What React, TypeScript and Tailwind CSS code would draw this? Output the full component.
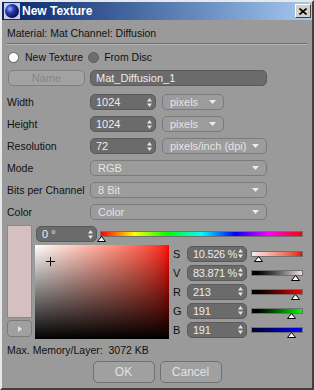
import React from 'react';

// small up/down spinner arrows used in the number fields
const Spinner = () => (
  <svg width="5" height="9" viewBox="0 0 5 9" className="shrink-0">
    <path d="M2.5 0 L5 3.5 L0 3.5 Z" fill="#e6e6e6" />
    <path d="M0 5.5 L5 5.5 L2.5 9 Z" fill="#e6e6e6" />
  </svg>
);

const DownArrow = () => (
  <svg width="7" height="4" viewBox="0 0 7 4" className="shrink-0">
    <path d="M0 0 L7 0 L3.5 4 Z" fill="#ececec" />
  </svg>
);

const NumField = ({ value, className = '' }: { value: string; className?: string }) => (
  <div
    className={`flex h-[16px] items-center justify-between overflow-hidden whitespace-nowrap rounded-[5px] border border-[#5a5a5a] bg-[#6b6b6b] pl-[5px] pr-[3px] text-[11px] text-[#ececec] ${className}`}
  >
    <span>{value}</span>
    <Spinner />
  </div>
);

const Dropdown = ({ value, className = '' }: { value: string; className?: string }) => (
  <div
    className={`flex h-[16px] items-center justify-between whitespace-nowrap rounded-[5px] border border-[#7a7a7a] bg-[#9c9c9c] pl-[7px] pr-[7px] text-[11px] text-[#e4e4e4] ${className}`}
  >
    <span>{value}</span>
    <DownArrow />
  </div>
);

const Marker = ({ left }: { left: number }) => (
  <svg
    width="9"
    height="6"
    viewBox="0 0 9 6"
    className="absolute top-full"
    style={{ left: left - 4 }}
  >
    <path d="M4.5 0.5 L8.5 5.5 L0.5 5.5 Z" fill="#ffffff" stroke="#000000" strokeWidth="1" />
  </svg>
);

interface ChannelRow {
  label: string;
  value: string;
  gradient: string;
  marker: number;
}

const channels: ChannelRow[] = [
  { label: 'S', value: '10.526 %', gradient: 'bg-linear-to-r from-[#f4ecec] to-[#e00000]', marker: 6 },
  { label: 'V', value: '83.871 %', gradient: 'bg-linear-to-r from-[#000000] to-[#ece2e2]', marker: 43 },
  { label: 'R', value: '213', gradient: 'bg-linear-to-r from-[#000000] to-[#ff0000]', marker: 43 },
  { label: 'G', value: '191', gradient: 'bg-linear-to-r from-[#000000] to-[#00ff00]', marker: 39 },
  { label: 'B', value: '191', gradient: 'bg-linear-to-r from-[#000030] to-[#0000ff]', marker: 39 },
];

const App = () => {
  return (
    <div
      className="relative flex h-[390px] w-[314px] flex-col overflow-hidden border-2 border-t-[#e8e8e8] border-l-[#e8e8e8] border-r-[#404040] border-b-[#404040] bg-[#9a9a9a] text-[10.5px] leading-[14px] text-[#111]"
      style={{ fontFamily: '"Liberation Sans", Arial, sans-serif' }}
    >
      {/* Title bar */}
      <div className="flex h-[18px] items-center bg-linear-to-r from-[#0a246a] to-[#a6caf0] pl-[2px] pr-[1px]">
        <svg width="16" height="16" viewBox="0 0 16 16" className="shrink-0">
          <defs>
            <radialGradient id="sph" cx="0.35" cy="0.35" r="0.7">
              <stop offset="0" stopColor="#9fb4ff" />
              <stop offset="0.4" stopColor="#2a3fb0" />
              <stop offset="1" stopColor="#050a40" />
            </radialGradient>
          </defs>
          <rect x="0" y="0" width="16" height="16" fill="#c8d0e8" />
          <circle cx="8" cy="8" r="7" fill="url(#sph)" />
        </svg>
        <span className="ml-[2px] text-[12px] font-bold text-white">New Texture</span>
        <div className="ml-auto flex h-[14px] w-[16px] items-center justify-center border border-t-white border-l-white border-r-[#404040] border-b-[#404040] bg-[#d4d0c8]">
          <svg width="8" height="7" viewBox="0 0 8 7">
            <path d="M0.5 0.5 L7.5 6.5 M7.5 0.5 L0.5 6.5" stroke="#000" strokeWidth="1.6" />
          </svg>
        </div>
      </div>

      <div className="flex flex-col px-[5px]">
        <div className="mt-[6px] h-[14px]">Material: Mat Channel: Diffusion</div>
        <div className="mt-[3px] border-t border-b border-t-[#707070] border-b-[#b4b4b4]" />

        {/* Radio row */}
        <div className="mt-[5px] flex h-[14px] items-center">
          <div className="ml-[1px] h-[11px] w-[11px] rounded-full border border-[#606060] bg-white" />
          <span className="ml-[6px]">New Texture</span>
          <div className="ml-[5px] h-[11px] w-[11px] rounded-full border border-[#5a5a5a] bg-[#6e6e6e]" />
          <span className="ml-[5px]">From Disc</span>
        </div>

        {/* Name row */}
        <div className="mt-[6px] flex h-[16px] items-center">
          <div className="ml-[1px] flex h-[16px] w-[77px] items-center justify-center rounded-[5px] border border-[#7e7e7e] bg-[#a2a2a2] text-[11px] text-[#868686]">
            Name
          </div>
          <div className="ml-[5px] flex h-[16px] w-[177px] items-center rounded-[5px] border border-[#5a5a5a] bg-[#6b6b6b] pl-[5px] text-[11px] text-[#ececec]">
            Mat_Diffusion_1
          </div>
        </div>

        {/* Width / Height / Resolution */}
        <div className="mt-[8px] flex h-[16px] items-center">
          <span className="w-[83px]">Width</span>
          <NumField value="1024" className="w-[66px]" />
          <Dropdown value="pixels" className="ml-[6px] w-[62px]" />
        </div>
        <div className="mt-[6px] flex h-[16px] items-center">
          <span className="w-[83px]">Height</span>
          <NumField value="1024" className="w-[66px]" />
          <Dropdown value="pixels" className="ml-[6px] w-[62px]" />
        </div>
        <div className="mt-[6px] flex h-[16px] items-center">
          <span className="w-[83px]">Resolution</span>
          <NumField value="72" className="w-[66px]" />
          <Dropdown value="pixels/inch (dpi)" className="ml-[6px] w-[105px]" />
        </div>

        {/* Mode / Bits / Color */}
        <div className="mt-[6px] flex h-[16px] items-center">
          <span className="w-[83px]">Mode</span>
          <Dropdown value="RGB" className="w-[177px]" />
        </div>
        <div className="mt-[6px] flex h-[16px] items-center">
          <span className="w-[83px] whitespace-nowrap">Bits per Channel</span>
          <Dropdown value="8 Bit" className="w-[177px]" />
        </div>
        <div className="mt-[6px] flex h-[16px] items-center">
          <span className="w-[83px]">Color</span>
          <Dropdown value="Color" className="w-[177px]" />
        </div>

        {/* Color picker */}
        <div className="mt-[5px] flex">
          <div className="flex w-[25px] flex-col">
            <div className="h-[93px] border border-[#8a8a8a] bg-[#d5bfbf]" />
            <div className="mt-[2px] flex h-[17px] items-center justify-center rounded-[4px] border border-[#7a7a7a] bg-[#a0a0a0]">
              <svg width="4" height="6" viewBox="0 0 4 6">
                <path d="M0 0 L4 3 L0 6 Z" fill="#e8e8e8" />
              </svg>
            </div>
          </div>

          <div className="ml-[3px] flex flex-col">
            <div className="flex items-start">
              <NumField value="0 °" className="ml-[1px] mt-[1px] h-[15px] w-[61px]" />
              <div className="relative ml-[3px] mt-[6px] h-[6px] w-[203px] border border-[#707070] bg-[linear-gradient(to_right,#ff0000,#ffff00,#00ff00,#00ffff,#0000ff,#ff00ff,#ff0000)]">
                <Marker left={0} />
              </div>
            </div>

            <div className="mt-[3px] flex">
              {/* SV square */}
              <div className="relative h-[94px] w-[134px] bg-linear-to-r from-white to-[#ff0000]">
                <div className="absolute inset-0 bg-linear-to-b from-transparent to-black" />
                <svg width="9" height="9" viewBox="0 0 9 9" className="absolute left-[11px] top-[12px]">
                  <path d="M4.5 0 V9 M0 4.5 H9" stroke="#000" strokeWidth="1" />
                </svg>
              </div>

              {/* Channel rows */}
              <div className="ml-[4px] mt-[1px] flex flex-col gap-[4px]">
                {channels.map((c) => (
                  <div key={c.label} className="flex h-[15px] items-center">
                    <span className="w-[14px] text-[11px]">{c.label}</span>
                    <NumField value={c.value} className="h-[15px] w-[60px] tracking-[-0.3px]" />
                    <div className={`relative ml-[4px] h-[6px] w-[52px] border border-[#707070] ${c.gradient}`}>
                      <Marker left={c.marker} />
                    </div>
                  </div>
                ))}
              </div>
            </div>
          </div>
        </div>

        <div className="mt-[4px] h-[14px]">Max. Memory/Layer:&nbsp; 3072 KB</div>

        <div className="mt-[4px] flex justify-center gap-[5px]">
          <div className="flex h-[22px] w-[62px] items-center justify-center rounded-[5px] border border-[#707070] bg-[#a0a0a0] text-[12px] text-[#e2e2e2]">
            OK
          </div>
          <div className="flex h-[22px] w-[62px] items-center justify-center rounded-[5px] border border-[#707070] bg-[#a0a0a0] text-[12px] text-[#e2e2e2]">
            Cancel
          </div>
        </div>
      </div>
    </div>
  );
};

export default App;
